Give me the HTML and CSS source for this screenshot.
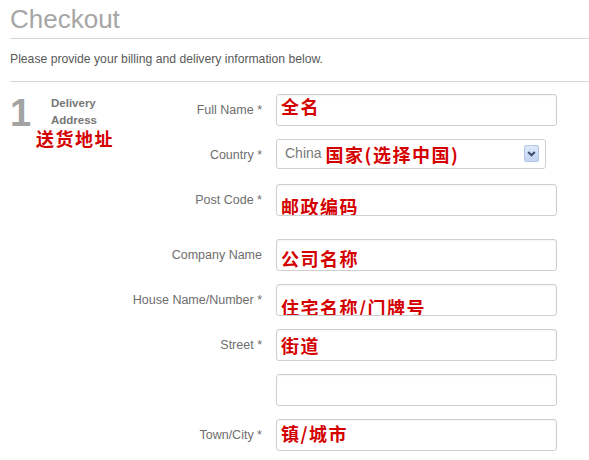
FILE: index.html
```html
<!DOCTYPE html>
<html lang="zh">
<head>
  <meta charset="UTF-8" />
  <meta name="viewport" content="width=device-width, initial-scale=1" />
  <title>Checkout</title>
  <link rel="stylesheet" href="styles.css">
</head>
<body>
  <div class="page">
    <h1>Checkout</h1>
    <p class="intro">Please provide your billing and delivery information below.</p>

    <div class="section">
      <div class="step">
        <div class="step-head">
          <span class="step-num">1</span>
          <span class="step-title">Delivery<br>Address</span>
        </div>
        <span class="note step-note">送货地址</span>
      </div>

      <div class="form">
        <div class="row">
          <label class="label">Full Name *</label>
          <div class="input"><span class="note drop-1">全名</span></div>
        </div>

        <div class="row">
          <label class="label">Country *</label>
          <div class="select">
            <span class="select-value">China</span>
            <span class="note drop-4">国家(选择中国)</span>
            <span class="select-btn">
              <svg width="15" height="17" viewBox="0 0 15 17">
                <path d="M4.2 7 L7.5 10.3 L10.8 7" fill="none" stroke="#3f5174" stroke-width="2.2" />
              </svg>
            </span>
          </div>
        </div>

        <div class="row spaced">
          <label class="label">Post Code *</label>
          <div class="input"><span class="note drop-11">邮政编码</span></div>
        </div>

        <div class="row">
          <label class="label">Company Name</label>
          <div class="input"><span class="note drop-8">公司名称</span></div>
        </div>

        <div class="row">
          <label class="label">House Name/Number *</label>
          <div class="input"><span class="note drop-12">住宅名称/门牌号</span></div>
        </div>

        <div class="row">
          <label class="label">Street *</label>
          <div class="input"><span class="note drop-5">街道</span></div>
        </div>

        <div class="row">
          <label class="label"></label>
          <div class="input"></div>
        </div>

        <div class="row">
          <label class="label">Town/City *</label>
          <div class="input"><span class="note drop-3">镇/城市</span></div>
        </div>
      </div>
    </div>
  </div>
</body>
</html>
```

FILE: styles.css
```css
body {
  margin: 0;
  background: #fff;
  font-family: "Liberation Sans", Arial, sans-serif;
  color: #555;
}
.page {
  padding-left: 10px;
}
h1 {
  margin: 4px 0 0;
  padding-bottom: 3px;
  font-size: 26px;
  font-weight: normal;
  line-height: 31px;
  color: #a6a6a6;
  border-bottom: 1px solid #d6d6d6;
}
.intro {
  margin: 0;
  padding: 13px 0 14px;
  font-size: 12.2px;
  line-height: 15px;
  color: #595959;
  border-bottom: 1px solid #d6d6d6;
}
.section {
  display: flex;
  padding-top: 12px;
}
.step {
  width: 110px;
  flex-shrink: 0;
}
.step-head {
  display: flex;
  align-items: flex-start;
}
.step-num {
  width: 41px;
  margin-top: 4px;
  font-size: 38px;
  font-weight: bold;
  line-height: 30px;
  color: #a3a3a3;
}
.step-title {
  margin-top: 1px;
  font-size: 11.5px;
  font-weight: bold;
  line-height: 17px;
  color: #777;
}
.note {
  display: block;
  font-family: "Noto Sans CJK SC", sans-serif;
  font-size: 18px;
  font-weight: bold;
  line-height: 20px;
  letter-spacing: 1.5px;
  color: #d40000;
  white-space: nowrap;
}
.step-note {
  margin: -1px 0 0 26px;
}
.form {
  display: flex;
  flex-direction: column;
}
.row {
  display: flex;
  align-items: center;
  gap: 14px;
  height: 32px;
  margin-bottom: 13px;
}
.row.spaced {
  margin-bottom: 23px;
}
.label {
  width: 142px;
  text-align: right;
  font-size: 12.5px;
  color: #6e6e6e;
}
.input {
  box-sizing: border-box;
  width: 281px;
  height: 32px;
  padding: 0 4px;
  border: 1px solid #cfcfcf;
  border-radius: 3px;
  box-shadow: inset 0 1px 2px rgba(0,0,0,0.05);
  overflow: hidden;
}
.select {
  box-sizing: border-box;
  display: flex;
  align-items: flex-start;
  align-self: flex-start;
  width: 270px;
  height: 30px;
  padding: 0 6px 0 8px;
  border: 1px solid #cfcfcf;
  border-radius: 3px;
}
.select-value {
  padding-top: 5px;
  font-size: 14px;
  line-height: 16px;
  color: #7a7a7a;
}
.select .note {
  margin-left: 4px;
}
.select-btn {
  box-sizing: border-box;
  display: flex;
  margin: 5px 0 0 auto;
  width: 15px;
  height: 17px;
  border: 1px solid #b3c6e8;
  border-radius: 2px;
  background: linear-gradient(#dde8f9, #c3d5f3);
}
.select-btn svg {
  margin: -1px;
}
.drop-1 { padding-top: 1px; }
.drop-3 { padding-top: 3px; }
.drop-4 { padding-top: 4px; }
.drop-5 { padding-top: 5px; }
.drop-8 { padding-top: 8px; }
.drop-11 { padding-top: 11px; }
.drop-12 { padding-top: 12px; }
```
